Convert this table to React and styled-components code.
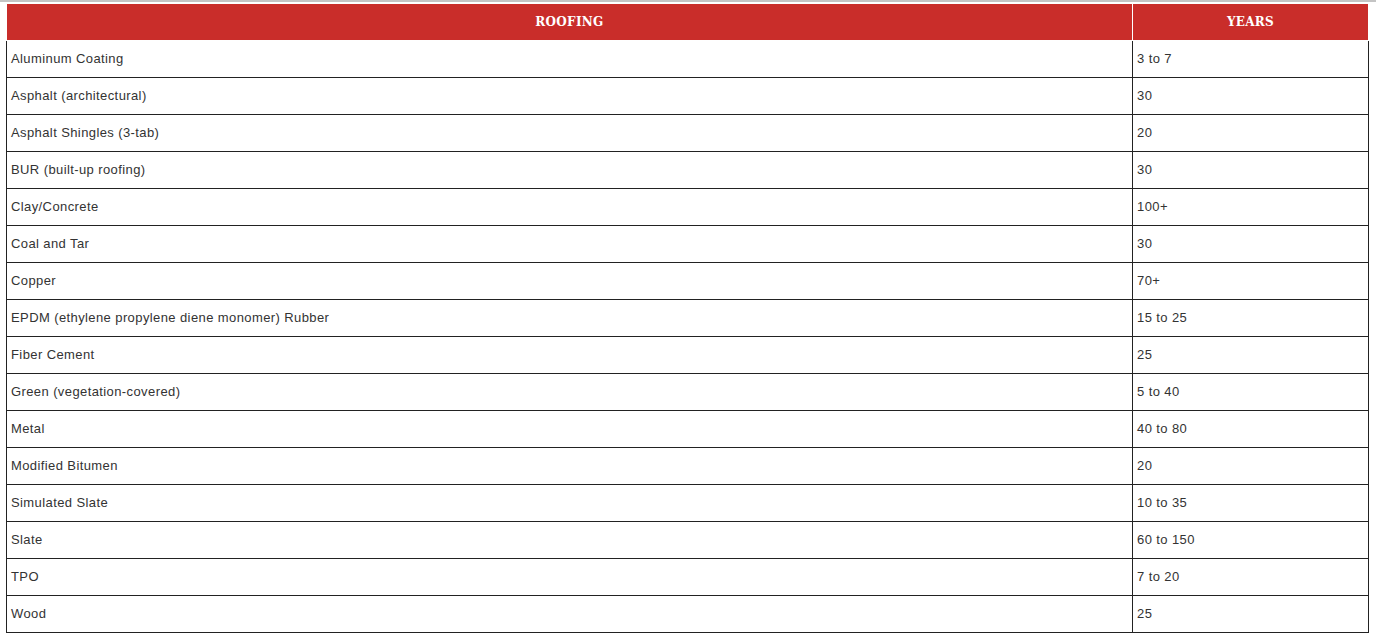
import styled, { createGlobalStyle } from "styled-components";

const rows = [
    ["Aluminum Coating", "3 to 7"],
    ["Asphalt (architectural)", "30"],
    ["Asphalt Shingles (3-tab)", "20"],
    ["BUR (built-up roofing)", "30"],
    ["Clay/Concrete", "100+"],
    ["Coal and Tar", "30"],
    ["Copper", "70+"],
    ["EPDM (ethylene propylene diene monomer) Rubber", "15 to 25"],
    ["Fiber Cement", "25"],
    ["Green (vegetation-covered)", "5 to 40"],
    ["Metal", "40 to 80"],
    ["Modified Bitumen", "20"],
    ["Simulated Slate", "10 to 35"],
    ["Slate", "60 to 150"],
    ["TPO", "7 to 20"],
    ["Wood", "25"],
];

export default function App() {
    return (
        <Page>
            <GlobalStyle />
            <TopRule />
            <Table>
                <HeadCell $first>Roofing</HeadCell>
                <HeadCell>Years</HeadCell>
                {rows.map(([name, years]) => (
                    <Row key={name}>
                        <Cell $first>{name}</Cell>
                        <Cell>{years}</Cell>
                    </Row>
                ))}
            </Table>
        </Page>
    );
}

const GlobalStyle = createGlobalStyle`
    * {
        box-sizing: border-box;
    }

    body {
        margin: 0;
        background: #fff;
        font-family: "Liberation Sans", Arial, sans-serif;
    }
`;

const Page = styled.div`
    width: 1376px;
    height: 638px;
    overflow: hidden;
`;

const TopRule = styled.div`
    height: 2px;
    background: #c4c4c4;
`;

const Table = styled.div`
    display: grid;
    grid-template-columns: 1127px 236px;
    margin: 2px 0 0 6px;
    width: 1363px;
`;

const HeadCell = styled.div`
    height: 37px;
    display: flex;
    align-items: center;
    justify-content: center;
    padding-bottom: 1px;
    background: #c92d2a;
    border-bottom: 1px solid #fff;
    border-left: ${(p) => (p.$first ? "1px solid #fff" : "0")};
    border-right: 1px solid #fff;
    color: #fff;
    font-family: "DejaVu Serif", serif;
    font-weight: bold;
    font-size: 12px;
    letter-spacing: 0.3px;
    text-transform: uppercase;
`;

const Row = styled.div`
    display: contents;
`;

const Cell = styled.div`
    height: 37px;
    display: flex;
    align-items: center;
    padding: 0 4px 1px;
    border-bottom: 1px solid #222;
    border-right: 1px solid #222;
    border-left: ${(p) => (p.$first ? "1px solid #222" : "0")};
    color: #333;
    font-size: 13px;
    letter-spacing: 0.4px;
`;
